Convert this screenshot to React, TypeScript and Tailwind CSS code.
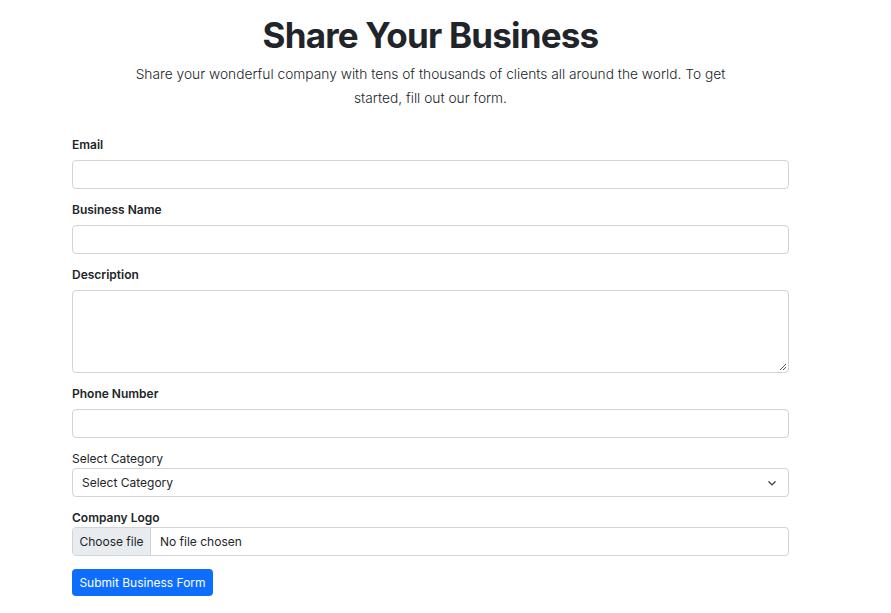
import React from "react";

const Label = ({ children }: { children: React.ReactNode }) => (
  <label className="block text-[12px] leading-[18px] mb-[6px] text-[#212529] font-semibold">{children}</label>
);

const inputCls = "block w-full h-[29px] border border-[#ced4da] rounded-[4px] bg-white";

export default function App() {
  return (
    <div className="min-h-screen bg-white text-[#212529]" style={{ fontFamily: "Inter, 'Noto Sans', sans-serif" }}>
      <div className="w-[717px] ml-[72px]">
        <h1 className="text-center text-[35px] font-bold leading-[44px] pt-[13px] tracking-[-0.8px]">Share Your Business</h1>
        <p className="text-center text-[13.75px] leading-[24px] font-light w-[600px] mx-auto mt-[5px]">
          Share your wonderful company with tens of thousands of clients all around the world. To get started, fill out our form.
        </p>
        <div className="mt-[26px]">
          <Label>Email</Label>
          <div className={inputCls}></div>
          <div className="mt-[12px]">
            <Label>Business Name</Label>
            <div className={inputCls}></div>
          </div>
          <div className="mt-[12px]">
            <Label>Description</Label>
            <div className="relative w-full h-[83px] border border-[#ced4da] rounded-[4px] bg-white">
              <svg className="absolute right-[1px] bottom-[1px]" width="8" height="8" viewBox="0 0 8 8">
                <path d="M7 1L1 7M7 4L4 7" stroke="#555" strokeWidth="1" />
              </svg>
            </div>
          </div>
          <div className="mt-[12px]">
            <Label>Phone Number</Label>
            <div className={inputCls}></div>
          </div>
          <div className="mt-[12px]">
            <label className="block text-[12px] leading-[18px] mb-0 text-[#212529]">Select Category</label>
            <div className={`${inputCls} flex items-center justify-between px-[9px] text-[12px]`}>
              <span>Select Category</span>
              <svg width="10" height="10" viewBox="0 0 16 16" className="mr-[2px]">
                <path d="M3 6l5 5 5-5" fill="none" stroke="#343a40" strokeWidth="2" strokeLinecap="round" strokeLinejoin="round" />
              </svg>
            </div>
          </div>
          <div className="mt-[12px]">
            <label className="block text-[12px] leading-[18px] mb-0 text-[#212529] font-semibold">Company Logo</label>
            <div className={`${inputCls} flex items-stretch text-[12px] overflow-hidden`}>
              <div className="w-[78px] bg-[#e9ecef] border-r border-[#ced4da] flex items-center justify-center">Choose file</div>
              <div className="flex items-center pl-[9px]">No file chosen</div>
            </div>
          </div>
          <button className="mt-[13px] h-[27px] w-[141px] bg-[#0d6efd] text-white text-[12px] font-normal rounded-[4px]">Submit Business Form</button>
        </div>
      </div>
    </div>
  );
}
